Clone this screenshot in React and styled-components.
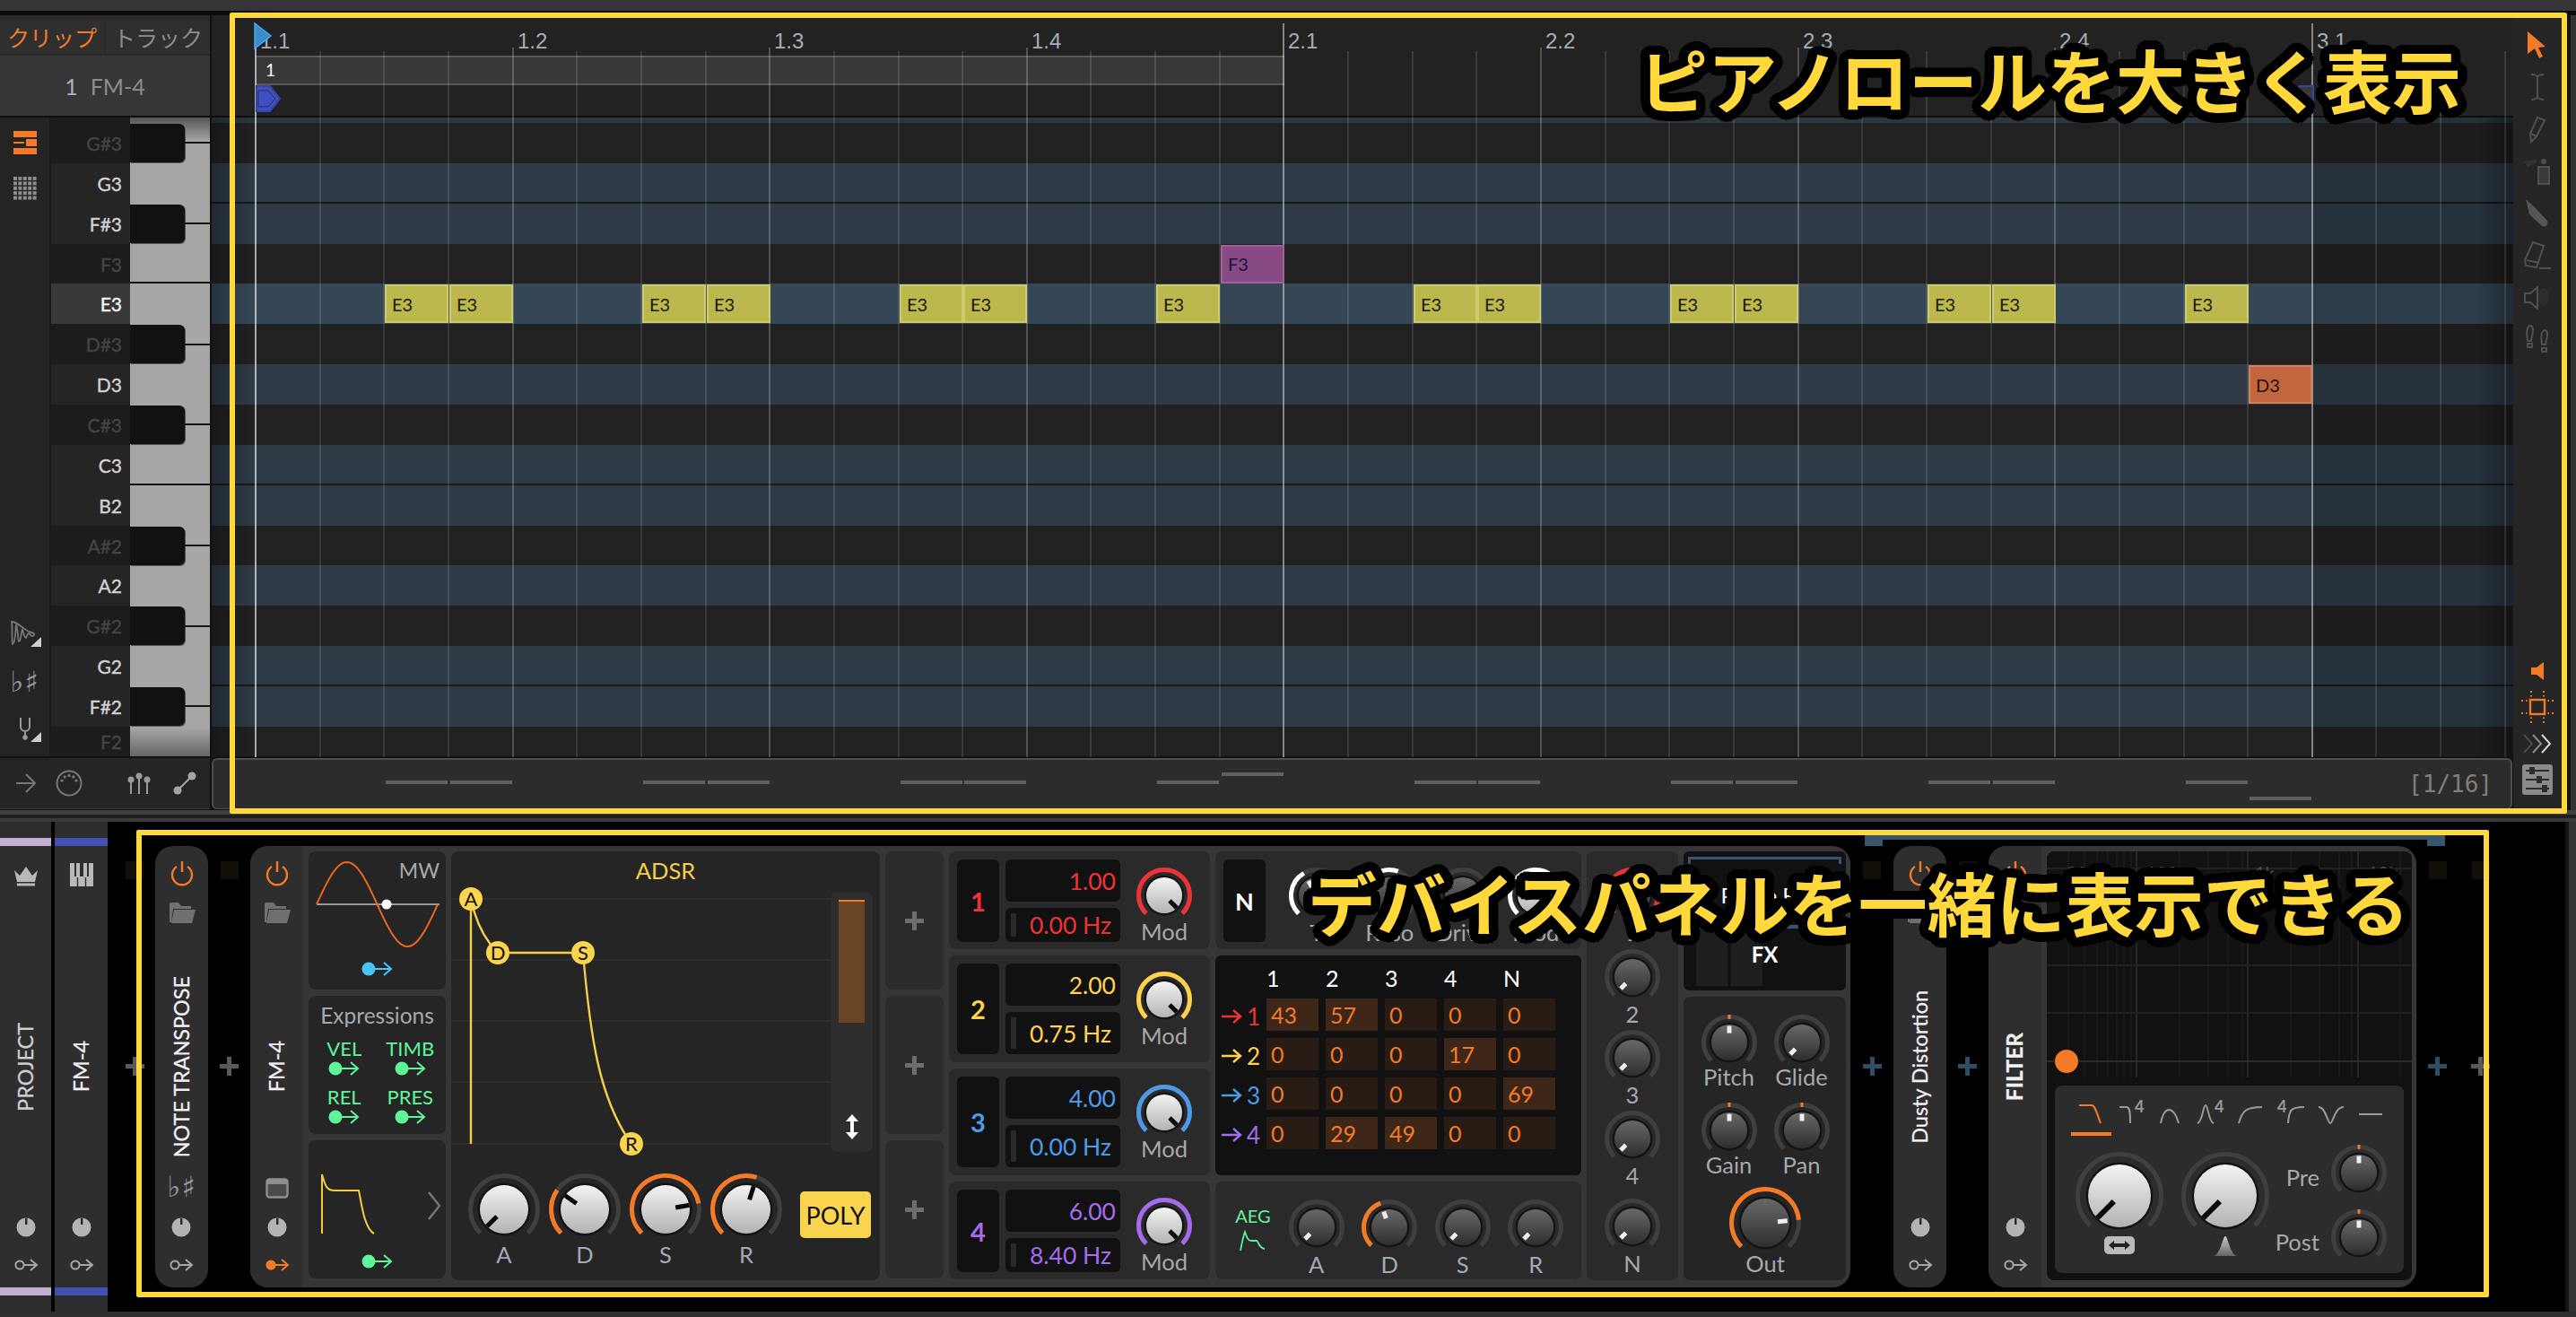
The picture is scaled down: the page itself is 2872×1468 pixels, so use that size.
import React from 'react';
import styled, { createGlobalStyle, css } from 'styled-components';

const Global = createGlobalStyle`
  html, body { margin: 0; padding: 0; background: #000; }
  * { box-sizing: border-box; }
  #root { width: 2872px; height: 1468px; }
`;

const ORANGE = '#f47a28';
const GREEN = '#5ef59a';
const CYAN = '#49c4fb';
const STEP = 71.65;
const ORIGIN = 49;

/* ---------- page frame ---------- */
const Page = styled.div`
  position: relative; width: 2872px; height: 1468px; overflow: hidden;
  display: flex; flex-direction: column; background: #000;
  font-family: Lato, "Noto Sans CJK JP", sans-serif;
`;
const TopBar = styled.div`height: 12px; background: #353535; flex: none;`;
const TopGap = styled.div`height: 5px; background: #0b0b0b; flex: none;`;
const Seam = styled.div`height: ${p => p.$h}px; background: ${p => p.$c}; flex: none;`;
const BottomEdge = styled.div`height: 6px; background: #2f2f2f; flex: none;`;

const Editor = styled.div`display: flex; height: 886px; flex: none; background: #111;`;
const LeftPane = styled.div`width: 234px; flex: none; display: flex; flex-direction: column; background: #111;`;
const Spacer = styled.div`width: 2px; flex: none; background: #111;`;
const CenterPane = styled.div`position: relative; width: 2566px; flex: none; display: flex; flex-direction: column;`;
const Toolbar = styled.div`
  width: 60px; flex: none; display: flex; flex-direction: column; align-items: stretch;
  background: #252525; padding: 9px 7px 17px 0;
`;
const RightGutter = styled.div`flex: 1; border-left: 4px solid #141414; background: #333;`;

/* ---------- left pane ---------- */
const Tabs = styled.div`display: flex; gap: 2px; height: 45px; padding-top: 5px; background: #2a2a2a; flex: none;`;
const Tab = styled.div`
  flex: 1; height: 38px; display: flex; align-items: center; justify-content: center;
  font: 25px "Noto Sans CJK JP", sans-serif; background: #2f2f2f;
  color: ${p => (p.$on ? ORANGE : '#8c8c8c')};
`;
const TrackHeader = styled.div`
  height: 67px; flex: none; background: #363636; display: flex; align-items: center; justify-content: center;
  gap: 14px; font-size: 25px; color: #8d8d8d;
  b { font-weight: 400; color: #aab2ba; }
`;
const Rule = styled.div`height: 2px; flex: none; background: ${p => p.$c || '#0e0e0e'};`;
const KeysArea = styled.div`height: 712px; flex: none; display: flex; overflow: hidden;`;
const SideIcons = styled.div`
  width: 57px; flex: none; background: #242424; border-right: 2px solid #1a1a1a;
  display: flex; flex-direction: column; align-items: center; padding: 15px 0 16px;
`;
const IconGap = styled.div`height: 25px; flex: none;`;
const LowerIcons = styled.div`margin-top: auto; display: flex; flex-direction: column; align-items: center; gap: 26px;`;
const KeyLabels = styled.div`width: 88px; flex: none; display: flex; flex-direction: column;`;
const KeyLabel = styled.div`
  flex: none; height: ${p => p.$h}px; display: flex; align-items: center; justify-content: flex-end;
  padding-right: 9px; font-size: 21px; -webkit-text-stroke: .4px currentColor;
  background: ${p => (p.$sel ? '#383838' : p.$dim ? '#1c1c1c' : '#252525')};
  color: ${p => (p.$sel ? '#f4f4f4' : p.$dim ? '#444' : '#d2d2d2')};
`;
const Piano = styled.div`
  position: relative; width: 89px; flex: none; display: flex; flex-direction: column; background: #a6a6a6;
  &::before { content: ''; position: absolute; left: 0; right: 0; top: 0; height: 26px; background: linear-gradient(#555, #a6a6a6); }
  &::after { content: ''; position: absolute; left: 0; right: 0; bottom: 0; height: 32px; background: linear-gradient(#a6a6a6, #666); }
`;
const PianoRow = styled.div`
  flex: none; height: ${p => p.$h}px; display: flex; align-items: center; position: relative; z-index: 1;
  ${p => p.$line && 'border-bottom: 2px solid #111;'}
`;
const BlackKey = styled.div`
  width: 61px; height: 43px; flex: none; background: #111; border-radius: 0 6px 6px 0;
  box-shadow: 1px 1px 0 #555;
`;
const KeyTail = styled.div`flex: 1; height: 2px; background: #151515;`;
const BottomLeft = styled.div`
  height: 57px; flex: none; background: #252525; display: flex; align-items: center; border-bottom: 1px solid #3a3a3a;
  padding-left: 18px;
`;
const BottomGap = styled.div`width: ${p => p.$w}px; flex: none;`;

/* ---------- timeline ---------- */
const Ruler = styled.div`position: relative; height: 112px; flex: none; background: #222;`;
const BarLabel = styled.div`
  position: absolute; top: 15px; font: 24px "Liberation Sans", sans-serif; color: #a7adb5; z-index: 2;
`;
const Clip = styled.div`
  position: absolute; left: 49px; top: 45px; width: 1147px; height: 33px; background: #383838;
  border-top: 2px solid #585858; border-bottom: 2px solid #585858; color: #fff; font-size: 19px; padding: 2px 0 0 11px;
`;
const Marker = styled.div`position: absolute; top: 78px; left: ${p => p.$x}px; z-index: 2; display: flex;`;
const Playhead = styled.div`position: absolute; top: 8px; left: 47px; z-index: 3; display: flex;`;
const GridBody = styled.div`position: relative; height: 712px; flex: none; overflow: hidden;`;
const Strip = styled.div`height: 6px; background: #2a3640;`;
const Row = styled.div`
  position: relative; flex: none; height: ${p => p.$h}px;
  background: ${p => (p.$sel ? '#354756' : p.$blue ? '#2e3a45' : '#212121')};
  ${p => p.$line && 'border-bottom: 2px solid #181818;'}
`;
const Note = styled.div`
  position: absolute; top: 1px; height: 43px; width: 71px; z-index: 2; padding-left: 6px;
  display: flex; align-items: center; font-size: 20px; color: ${p => p.$ink};
  background: ${p => p.$fill}; border: 2px solid ${p => p.$edge};
`;
const GridLine = styled.div`
  position: absolute; width: 2px; bottom: 59px; z-index: 1; top: ${p => p.$top}px;
  background: rgba(255, 255, 255, ${p => p.$a});
`;
const ShadeLeft = styled.div`
  position: absolute; left: 0; top: 0; bottom: 0; width: 49px; z-index: 1;
  background: linear-gradient(90deg, rgba(0,0,0,.28), rgba(0,0,0,0));
`;
const ShadeRight = styled.div`
  position: absolute; left: 2343px; right: 0; top: 0; bottom: 0; z-index: 1;
  background: linear-gradient(90deg, rgba(0,0,0,.15), rgba(0,0,0,.15) calc(100% - 40px), rgba(0,0,0,.42));
`;
const LaneBar = styled.div`
  position: relative; height: 57px; flex: none; margin-right: 1px; background: #2c2c2c; border: 2px solid #4e4e4e;
  border-width: 2px 2px 1px 2px; border-radius: 6px;
  display: flex; align-items: center; justify-content: flex-end; padding-right: 20px;
  font: 26px "DejaVu Sans Mono", monospace; color: #7f7f7f;
`;
const Velocity = styled.div`position: absolute; height: 4px; width: 69px; background: #606060;`;

const ToolCell = styled.div`height: 47px; flex: none; display: flex; align-items: center; justify-content: center;`;
const ToolLower = styled.div`margin-top: auto; display: flex; flex-direction: column; align-items: center; gap: 12px;`;
const SettingsBox = styled.div`
  width: 34px; height: 34px; background: #8a8a8a; border-radius: 3px; display: flex; align-items: center; justify-content: center;
`;

/* ---------- device rack ---------- */
const Rack = styled.div`position: relative; display: flex; height: 546px; flex: none; background: #000;`;
const TrackStrip = styled.div`
  display: flex; flex-direction: column; flex: none; width: ${p => p.$w}px; margin-right: ${p => p.$mr || 0}px;
  background: #2d2d2d; padding-top: 18px;
`;
const ColorBar = styled.div`height: 9px; flex: none; background: ${p => p.$c};`;
const Chain = styled.div`display: flex; align-items: flex-start; padding-top: 27px; flex: 1;`;
const Slot = styled.div`
  width: ${p => p.$w}px; flex: none; display: flex; flex-direction: column; align-items: center;
  padding-left: ${p => p.$pl || 0}px;
`;
const SlotSquare = styled.div`width: 20px; height: 20px; margin-top: 17px; background: #120f08;`;
const Plus = styled.div`
  position: relative; width: 21px; height: 21px; margin-top: ${p => p.$mt ?? 198}px; color: ${p => p.$c || '#5a5a5a'};
  &::before { content: ''; position: absolute; left: 8px; top: 0; width: 5px; height: 100%; background: currentColor; }
  &::after { content: ''; position: absolute; top: 8px; left: 0; height: 5px; width: 100%; background: currentColor; }
`;
const Sidebar = styled.div`
  width: ${p => p.$w || 59}px; height: 492px; flex: none; display: grid; grid-template-rows: 1fr auto 1fr; justify-items: center;
  background: #2e2e2e;
  ${p => p.$round && 'border-radius: 20px;'}
`;
const SideTop = styled.div`display: flex; flex-direction: column; align-items: center; gap: 20px; padding-top: ${p => p.$pt ?? 15}px;`;
const SideBottom = styled.div`display: flex; flex-direction: column; align-items: center; justify-content: flex-end; gap: 21px; padding-bottom: 15px;`;
const VerticalName = styled.div`
  writing-mode: vertical-rl; transform: rotate(180deg); font-size: ${p => p.$s || 23.4}px; line-height: 1; white-space: nowrap;
  -webkit-text-stroke: .3px currentColor;
  color: ${p => p.$c || '#f0f0f0'}; font-weight: ${p => p.$w || 400};
`;
const SharpFlat = styled.div`
  font: 32px "DejaVu Sans", sans-serif; color: #9a9a9a; line-height: 26px; height: 26px; letter-spacing: 1px;
`;

const Device = styled.div`
  flex: none; display: flex; height: 492px; background: #363636; overflow: hidden; border-radius: 20px;
`;
const DeviceGrid = styled.div`
  flex: none; display: grid; grid-template-columns: 153px 478px 65px 291px 408px 102px 181px; column-gap: 6px;
  padding: 6px 5px 8px 6px; align-items: start;
`;
const Stack = styled.div`display: flex; flex-direction: column; gap: 7px;`;
const Panel = styled.div`
  position: relative; border-radius: 8px; background: ${p => p.$bg || '#252525'};
  ${p => p.$h && css`height: ${p.$h}px;`}
`;
const MwLabel = styled.div`position: absolute; right: 7px; top: 7px; font-size: 23px; color: #a7a9ab;`;
const CenterFlow = styled.div`display: flex; justify-content: center; margin-top: ${p => p.$mt || 0}px;`;
const ExprTitle = styled.div`text-align: center; font-size: 24.5px; color: #a7a9ab; padding-top: 8px; line-height: 28px;`;
const ExprGrid = styled.div`display: grid; grid-template-columns: 1fr 1fr; padding: 10px 3px 0; row-gap: 9px; justify-items: center;`;
const ExprCell = styled.div`
  display: flex; flex-direction: column; align-items: center; color: ${GREEN}; font-size: 22px; line-height: 25px;
`;
const EnvRow = styled.div`display: flex; align-items: flex-start; height: 125px; padding: 26px 0 0 0;`;

const AdsrTitle = styled.div`text-align: center; padding-top: 7px; font-size: 25.5px; line-height: 28px; color: #f5ce4a; height: 36px;`;
const GraphRow = styled.div`display: flex; align-items: flex-start; height: 310px;`;
const Scale = styled.div`
  width: 47px; height: 290px; margin-top: 9px; background: #2e2e2e; border-radius: 8px; padding: 9px 9px 14px;
  display: flex; flex-direction: column; align-items: center;
`;
const ScaleFill = styled.div`width: 29px; height: 137px; background: #694425; border-top: 2px solid ${ORANGE};`;
const ScaleArrow = styled.div`margin-top: auto; display: flex;`;
const AdsrKnobs = styled.div`display: flex; align-items: flex-start; padding: 9px 0 0 14px;`;
const PolyButton = styled.div`
  width: 79px; height: 52px; margin: 24px 0 0 15px; background: #f9d54f; border-radius: 5px;
  display: flex; align-items: center; justify-content: center; font-size: 27px; color: #111;
`;
const KnobCell = styled.div`
  display: flex; flex-direction: column; align-items: center; flex: none;
  ${p => p.$w && css`width: ${p.$w}px;`}
  ${p => p.$mt && css`margin-top: ${p.$mt}px;`}
  ${p => p.$h && css`height: ${p.$h}px;`}
`;
const KnobLabel = styled.div`
  font-size: 25.5px; line-height: 28px; margin-top: ${p => p.$lift ?? -8}px; text-align: center; white-space: nowrap;
  color: ${p => (p.$blue ? '#a3aab6' : '#a7a9ab')};
`;
const SvgBox = styled.svg`display: block; flex: none; overflow: visible;`;

const PlusCell = styled.div`
  height: 154px; border-radius: 8px; background: #2c2c2c; display: flex; align-items: center; justify-content: center;
`;
const OpRow = styled.div`
  display: grid; grid-template-columns: 47px 128px 1fr; grid-template-rows: 47px 1fr; gap: 7px; padding: 9px 9px ${p => p.$pb}px;
  height: ${p => p.$h}px; background: #2a2a2a; border-radius: 8px; color: ${p => p.$c};
`;
const OpNumber = styled.div`
  grid-row: 1 / span 2; background: #111; border-radius: 6px; display: flex; align-items: center; justify-content: center;
  font-weight: 700; font-size: 29px;
`;
const OpValue = styled.div`
  background: #111; border-radius: 6px; display: flex; align-items: center; justify-content: flex-end; padding-right: 5px; font-size: 26.5px;
`;
const OpHz = styled(OpValue)`padding: 0 10px 0 6px;`;
const Meter = styled.div`width: 6px; align-self: stretch; margin: 6px auto 6px 0; background: #2a2a2a;`;
const OpKnob = styled(KnobCell)`grid-column: 3; grid-row: 1 / span 2; margin-top: 5px;`;

const KnobBar = styled.div`
  display: flex; align-items: flex-start; height: 109px; padding: 9px; background: #2a2a2a; border-radius: 8px;
`;
const NBox = styled.div`
  width: 47px; height: 92px; margin-right: 16px; flex: none; background: #111; border-radius: 6px; color: #fff;
  display: flex; align-items: center; justify-content: center; font-weight: 700; font-size: 27px;
`;
const AegLead = styled.div`
  width: 66px; margin-right: -3px; flex: none; padding-top: 16px; display: flex; flex-direction: column; align-items: center;
  color: ${GREEN}; font-size: 20px; line-height: 26px; gap: 4px;
`;
const Matrix = styled.div`
  height: 245px; background: #111; border-radius: 6px; align-content: start;
  display: grid; grid-template-columns: 49px repeat(5, 58px); column-gap: 8px; grid-template-rows: 40px repeat(4, 36px); row-gap: 8px;
`;
const MatrixHead = styled.div`font-size: 25px; color: #fff; padding-top: 11px; line-height: 28px;`;
const MatrixRowHead = styled.div`
  display: flex; align-items: center; gap: 5px; padding: 4px 0 0 7px; color: ${p => p.$c}; font-size: 26px;
`;
const MatrixCell = styled.div`
  padding-left: 5px; display: flex; align-items: center; font-size: 25px; color: ${ORANGE};
  background: ${p => (p.$on ? '#3e2718' : '#281c14')};
`;
const KnobColumn = styled.div`
  height: 478px; background: #2a2a2a; border-radius: 8px; display: flex; flex-direction: column; align-items: center; padding-top: 14px;
`;
const FxDisplay = styled.div`
  height: 155px; background: #111; border-radius: 6px; padding: 6px 5px 5px; display: flex; flex-direction: column; overflow: hidden;
`;
const BracketTop = styled.div`height: 8px; border: 3px solid #37566e; border-bottom: 0; flex: none;`;
const FxName = styled.div`height: 68px; flex: none; display: flex; align-items: center; justify-content: center; color: #fff; font-size: 24px;`;
const BracketBottom = styled.div`height: 4px; background: #37566e; flex: none;`;
const FxLower = styled.div`position: relative; flex: 1; display: flex; gap: 4px; padding-left: 9px;`;
const FxBar = styled.div`width: 35px; background: #1f1f1f;`;
const FxLabel = styled.div`
  position: absolute; left: 0; right: 0; top: 14px; text-align: center; color: #fff; font-weight: 700; font-size: 24px;
`;
const MixPanel = styled.div`
  height: 316px; border-radius: 8px; background: #252525; display: grid; grid-template-columns: 81px 81px; row-gap: 11px;
  padding: 16px 0 0 10px; align-content: start;
`;
const OutCell = styled(KnobCell)`grid-column: 1 / span 2; margin-top: -4px;`;

/* filter */
const FilterBody = styled.div`padding: 6px 5px 8px 6px; flex: none;`;
const FilterDisplay = styled.div`
  width: 407px; height: 478px; background: #111; border-radius: 8px; display: flex; flex-direction: column; align-items: center; overflow: hidden;
`;
const FilterControls = styled.div`
  width: 389px; height: 209px; margin-top: 9px; background: #2c2c2c; border-radius: 8px; flex: none; padding: 18px 0 0 18px;
`;
const FilterTabs = styled.div`display: flex; height: 38px;`;
const FilterTab = styled.div`
  width: 44.5px; height: 38px; display: flex; justify-content: center; align-items: flex-start;
  ${p => p.$on && `border-bottom: 4px solid ${ORANGE};`}
`;
const FilterKnobs = styled.div`display: flex; align-items: flex-start; margin: 14px 0 0 -5px;`;
const BigCell = styled.div`width: 118px; display: flex; flex-direction: column; align-items: center; flex: none;`;
const BigIcon = styled.div`margin-top: -8px; display: flex;`;
const PrePost = styled.div`display: flex; flex-direction: column; margin-top: -8px; margin-left: -1px;`;
const PreRow = styled.div`display: flex; align-items: flex-start; height: 72px;`;
const PreLabel = styled.div`
  width: 47px; margin-top: 26px; text-align: right; font-size: 25.5px; line-height: 28px; color: #a7a9ab; margin-right: 9px; white-space: nowrap;
  display: flex; justify-content: flex-end;
`;

/* annotations */
const Frame = styled.div`
  position: absolute; left: ${p => p.$x}px; top: ${p => p.$y}px; width: ${p => p.$w}px; height: ${p => p.$h}px;
  border: 6px solid #ffd93b; border-radius: 2px; z-index: 20; pointer-events: none;
`;
const outline = (() => {
  const out = [];
  [10.5, 7, 3.5].forEach(r => {
    for (let i = 0; i < 28; i++) {
      const a = (i / 28) * Math.PI * 2;
      out.push(`${(Math.cos(a) * r).toFixed(1)}px ${(Math.sin(a) * r).toFixed(1)}px 0 #000`);
    }
  });
  return out.join(',');
})();
const Caption = styled.div`
  position: absolute; left: ${p => p.$x}px; top: ${p => p.$y}px; z-index: 21; white-space: nowrap;
  font: 700 77px/1 "Noto Sans CJK JP", sans-serif; color: #ffd93b; text-shadow: ${outline};
`;
const ChainBracket = styled.div`
  position: absolute; left: 2079px; top: 14px; width: 647px; height: 13px; border-top: 6px solid #37566e; z-index: 1;
  &::before, &::after { content: ''; position: absolute; top: -6px; width: 20px; height: 13px; background: #37566e; }
  &::before { left: 0; } &::after { right: 0; }
`;

/* ---------- drawings ---------- */
const pol = (cx, cy, r, deg) => {
  const a = ((deg - 90) * Math.PI) / 180;
  return [cx + r * Math.cos(a), cy + r * Math.sin(a)];
};
const arcPath = (c, r, a, b) => {
  const [x1, y1] = pol(c, c, r, a);
  const [x2, y2] = pol(c, c, r, b);
  return `M${x1} ${y1}A${r} ${r} 0 ${b - a > 180 ? 1 : 0} 1 ${x2} ${y2}`;
};
function Knob({ ring = 31, cap = 20, angle = -135, arcTo, arcColor = ORANGE, tone = 'dark', tick, long }) {
  const s = ring * 2 + 8;
  const c = s / 2;
  const r = ring - 2.5;
  const light = tone === 'light';
  const [x1, y1] = pol(c, c, cap * (long ? 0.25 : light ? 0.42 : 0.52), angle);
  const [x2, y2] = pol(c, c, cap * (light ? 1 : 0.92), angle);
  return (
    <SvgBox width={s} height={s} viewBox={`0 0 ${s} ${s}`}>
      <defs>
        <linearGradient id="capL" x1="0" y1="0" x2="0" y2="1"><stop offset="0" stopColor="#f3f3f3" /><stop offset="1" stopColor="#b3b3b3" /></linearGradient>
        <linearGradient id="capD" x1="0" y1="0" x2="0" y2="1"><stop offset="0" stopColor="#686868" /><stop offset="1" stopColor="#2e2e2e" /></linearGradient>
      </defs>
      <path d={arcPath(c, r, -135, 135)} fill="none" stroke="#3f3f3f" strokeWidth="5" />
      {arcTo !== undefined && <path d={arcPath(c, r, -135, arcTo)} fill="none" stroke={arcColor} strokeWidth="5" />}
      {tick && <path d={arcPath(c, r, -3, 3)} fill="none" stroke={ORANGE} strokeWidth="5" />}
      <circle cx={c} cy={c} r={cap + 2.5} fill="#141414" />
      <circle cx={c} cy={c} r={cap} fill={light ? 'url(#capL)' : 'url(#capD)'} />
      <line x1={x1} y1={y1} x2={x2} y2={y2} stroke={light ? '#0a0a0a' : '#efefef'} strokeWidth={long ? 6 : 5} />
    </SvgBox>
  );
}
const Power = () => (
  <SvgBox width="26" height="28" viewBox="0 0 26 28" fill="none" stroke={ORANGE} strokeWidth="2.4">
    <path d="M7 8a11 11 0 1 0 12 0" /><path d="M13 2v12" />
  </SvgBox>
);
const Folder = () => (
  <SvgBox width="30" height="23" viewBox="0 0 30 23"><path d="M1 2q0-2 2-2h8l3 4h11v3H5L3 22H1z M6 8h24l-4 15H3z" fill="#707070" /></SvgBox>
);
const MiniKnob = () => (
  <SvgBox width="22" height="22" viewBox="0 0 22 22"><circle cx="11" cy="11" r="10.5" fill="#b4b4b4" /><rect x="10" y="1" width="2.4" height="7" fill="#2a2a2a" /></SvgBox>
);
const OutArrow = ({ c = '#a8a8a8', solid }) => (
  <SvgBox width="26" height="20" viewBox="0 0 26 20" fill="none" stroke={c} strokeWidth="2">
    <circle cx="6" cy="10" r="4.6" fill={solid ? c : 'none'} /><path d="M11 10h14M18 4l7 6-7 6" />
  </SvgBox>
);
const ModArrow = ({ c }) => (
  <SvgBox width="35" height="20" viewBox="0 0 35 20" fill="none" stroke={c} strokeWidth="2">
    <circle cx="8" cy="10" r="7.5" fill={c} stroke="none" /><path d="M12 10h21M25 3l8 7-8 7" />
  </SvgBox>
);
const RowArrow = ({ c }) => (
  <SvgBox width="23" height="20" viewBox="0 0 23 20" fill="none" stroke={c} strokeWidth="2.4"><path d="M0 10h21M13 3l8 7-8 7" /></SvgBox>
);
const Crown = () => (
  <SvgBox width="28" height="23" viewBox="0 0 28 23"><path d="M1 5l6 6 7-10 7 10 6-6-3 13H4z" fill="#b9b9b9" /><rect x="4" y="19.5" width="20" height="3" fill="#b9b9b9" /></SvgBox>
);
const PianoGlyph = () => (
  <SvgBox width="26" height="26" viewBox="0 0 26 26">
    <path d="M0 0h5v15h2V0h4v15h4V0h4v15h2V0h5v26H0z" fill="#b9b9b9" /><path d="M8.5 16v10M17.5 16v10" stroke="#2d2d2d" strokeWidth="1.4" />
  </SvgBox>
);
const WindowIcon = () => (
  <SvgBox width="26" height="23" viewBox="0 0 26 23"><rect x="1.5" y="1.5" width="23" height="20" rx="3" fill="#4b4b4b" stroke="#8f8f8f" strokeWidth="2.4" /><rect x="2" y="2" width="22" height="5" fill="#8f8f8f" /></SvgBox>
);
const RollIcon = () => (
  <SvgBox width="26" height="26" viewBox="0 0 26 26" fill={ORANGE}>
    <rect x="0" y="0" width="26" height="7" /><rect x="14" y="9" width="12" height="8" /><rect x="0" y="12" width="12" height="2" /><rect x="0" y="19" width="26" height="7" />
  </SvgBox>
);
const DotsIcon = () => (
  <SvgBox width="26" height="26" viewBox="0 0 26 26" fill="#8d8d8d">
    {[0, 1, 2, 3, 4].flatMap(r => [0, 1, 2, 3, 4].map(c => <rect key={`${r}${c}`} x={c * 5.4} y={r * 5.4} width="4" height="4" />))}
  </SvgBox>
);
const WaveIcon = () => (
  <SvgBox width="36" height="30" viewBox="0 0 36 30" fill="none" stroke="#777" strokeWidth="1.8">
    <path d="M3 2c1 6 0 18 1 25 4-2 3-18 4-21 2 3 2 16 3 18 3-1 2-11 4-13 1 2 2 9 4 9 1-2 2-5 3-5s2 3 4 3 4-3-1-4-7-4-9-5-8-7-13-7z" />
    <path d="M36 30H24l12-11z" fill="#cfcfcf" stroke="none" />
  </SvgBox>
);
const ForkIcon = () => (
  <SvgBox width="36" height="28" viewBox="0 0 36 28">
    <path d="M13 1v10a5 5 0 0 0 10 0V1M18 16v7" fill="none" stroke="#9a9a9a" strokeWidth="2" /><circle cx="18" cy="23" r="2.8" fill="#9a9a9a" />
    <path d="M36 28H24l12-11z" fill="#cfcfcf" />
  </SvgBox>
);
const ArrowLine = () => (
  <SvgBox width="22" height="24" viewBox="0 0 22 24" fill="none" stroke="#777" strokeWidth="2"><path d="M0 12h20M11 2l10 10-10 10" /></SvgBox>
);
const MidiIcon = () => (
  <SvgBox width="30" height="30" viewBox="0 0 30 30"><circle cx="15" cy="15" r="13.5" fill="none" stroke="#777" strokeWidth="2" />
    {[-70, -35, 0, 35, 70].map(a => { const [x, y] = pol(15, 15, 8.5, a); return <circle key={a} cx={x} cy={y} r="1.7" fill="#777" />; })}
  </SvgBox>
);
const MixerIcon = () => (
  <SvgBox width="26" height="24" viewBox="0 0 26 24" fill="#9b9b9b">
    <rect x="3" y="7" width="2" height="17" /><rect x="12" y="4" width="2" height="20" /><rect x="21" y="7" width="2" height="17" />
    <circle cx="4" cy="8" r="3.5" /><circle cx="13" cy="4" r="3.5" /><circle cx="22" cy="8" r="3.5" />
  </SvgBox>
);
const LinkIcon = () => (
  <SvgBox width="26" height="26" viewBox="0 0 26 26"><path d="M5 21L21 5" stroke="#a5a5a5" strokeWidth="2" /><circle cx="5" cy="21" r="4.5" fill="#a5a5a5" /><circle cx="21" cy="5" r="4.5" fill="#a5a5a5" /></SvgBox>
);
const Dim = { fill: 'none', stroke: '#505050', strokeWidth: 2 };
const tools = [
  <SvgBox key="c" width="22" height="30" viewBox="0 0 22 30"><path d="M0 0l20 17-8 1 5 10-4 2-5-11-8 6z" fill={ORANGE} /></SvgBox>,
  <SvgBox key="i" width="16" height="30" viewBox="0 0 16 30" {...Dim}><path d="M1 1c3 0 6 0 7 3 1-3 4-3 7-3M8 4v22M1 29c3 0 6 0 7-3 1 3 4 3 7 3" /></SvgBox>,
  <SvgBox key="p" width="20" height="30" viewBox="0 0 20 30" {...Dim}><path d="M10 2l8 3-9 18-6 6-1-9z M3 20l6 3" /></SvgBox>,
  <SvgBox key="s" width="30" height="30" viewBox="0 0 30 30"><path d="M0 4l14-2v3L4 10z" fill="#333" /><path d="M16 10h12v19H16z" fill="#3a3a3a" stroke="#505050" strokeWidth="2" /><circle cx="22" cy="4" r="3" fill="#505050" /></SvgBox>,
  <SvgBox key="b" width="26" height="32" viewBox="0 0 26 32"><path d="M0 0l10 9 14 15c2 4-2 8-6 6L4 17z" fill="#555" /></SvgBox>,
  <SvgBox key="e" width="30" height="32" viewBox="0 0 30 32" {...Dim}><path d="M10 1l12 4-8 24-12-2-1-6z M3 21l14 3M17 30h13" /></SvgBox>,
  <SvgBox key="v" width="30" height="26" viewBox="0 0 30 26"><path d="M1 8h6l8-7v24l-8-7H1z" fill="none" stroke="#505050" strokeWidth="2" /><ellipse cx="22" cy="12" rx="6" ry="10" fill="#2e2e2e" /></SvgBox>,
  <SvgBox key="f" width="28" height="34" viewBox="0 0 28 34" fill="none" stroke="#505050" strokeWidth="2"><path d="M3 4c3-5 6-3 6 2s-2 9-2 12H3C3 14 1 8 3 4zM19 9c3-5 6-3 6 2 0 4-2 8-2 11h-4c0-4-2-9 0-13zM3 21h5v4H3zM19 26h5v4h-5z" /></SvgBox>,
];
const VDown = () => (
  <SvgBox width="14" height="20" viewBox="0 0 14 20"><path d="M0 6h6l8-6v20l-8-6H0z" fill={ORANGE} /></SvgBox>
);
const Snap = () => (
  <SvgBox width="36" height="36" viewBox="0 0 36 36" fill="none" stroke={ORANGE} strokeWidth="2">
    <rect x="10" y="10" width="16" height="16" strokeWidth="2.4" />
    <path d="M11 0v2M25 0v2M11 34v2M25 34v2M0 11h2M0 25h2M34 11h2M34 25h2" />
    <path d="M11 5v1.500M25 5v1.500M11 29.500v1.500M25 29.500v1.500M5 11h1.500M5 25h1.500M29.500 11h1.500M29.500 25h1.500" />
  </SvgBox>
);
const Chevrons = () => (
  <SvgBox width="32" height="22" viewBox="0 0 32 22" fill="none" strokeWidth="2">
    <path d="M1 1l9 10-9 10" stroke="#4a4a4a" /><path d="M11 1l9 10-9 10" stroke="#8a8a8a" /><path d="M21 1l9 10-9 10" stroke="#d4d4d4" />
  </SvgBox>
);
const Sliders = () => (
  <SvgBox width="30" height="28" viewBox="0 0 30 28" stroke="#2c2c2c" strokeWidth="2" fill="#2c2c2c">
    <path d="M2 4h26M2 14h26M2 24h26" /><rect x="7" y="1" width="4" height="6" /><rect x="15" y="11" width="4" height="6" /><rect x="21" y="21" width="4" height="6" />
  </SvgBox>
);
const Wave = () => {
  const pts = [];
  for (let i = 0; i <= 60; i++) {
    const x = 9 + (135 * i) / 60;
    pts.push(`${x.toFixed(1)},${(59 - 47 * Math.sin((i / 60) * 2 * Math.PI)).toFixed(1)}`);
  }
  return (
    <SvgBox width="153" height="118" viewBox="0 0 153 118">
      <line x1="9" y1="59" x2="146" y2="59" stroke="#9a9a9a" strokeWidth="2" />
      <polyline points={pts.join(' ')} fill="none" stroke="#e8691c" strokeWidth="2" />
      <circle cx="87" cy="59" r="5.5" fill="#fff" />
    </SvgBox>
  );
};
const MiniEnv = () => (
  <SvgBox width="153" height="80" viewBox="0 0 153 80" fill="none">
    <path d="M15 78V12c3 10 4 18 14 18h27c3 14 6 42 17 48" stroke="#f5c93f" strokeWidth="2" />
    <path d="M134 62l12-15-12-15" stroke="#777" strokeWidth="2.4" />
  </SvgBox>
);
const AegGlyph = () => (
  <SvgBox width="30" height="22" viewBox="0 0 30 22" fill="none" stroke={GREEN} strokeWidth="1.8"><path d="M1 22Q4 6 6 1c2 6 3 10 7 10h6c2 0 2 8 9 9" /></SvgBox>
);
const NODE_R = 13;
const AdsrGraph = () => {
  const nodes = [['A', 22, 17], ['D', 52, 77], ['S', 147, 77], ['R', 201, 290]];
  return (
    <SvgBox width="423" height="310" viewBox="0 0 423 310">
      {[17, 85, 153, 221, 290].map(y => <line key={y} x1="0" x2="423" y1={y} y2={y} stroke="#2e2e2e" strokeWidth="2" />)}
      <g fill="none" stroke="#f5ce4a" strokeWidth="2.4">
        <path d="M22 17V290M22 17Q30 55 52 77H147C155 170 165 240 201 290" />
      </g>
      {nodes.map(([t, x, y]) => (
        <g key={t}>
          <circle cx={x} cy={y} r={NODE_R} fill="#f9d44c" />
          <text x={x} y={y + 8} textAnchor="middle" fontSize="22" fontFamily="Lato" fill="#111">{t}</text>
        </g>
      ))}
    </SvgBox>
  );
};
const UpDown = () => (
  <SvgBox width="14" height="28" viewBox="0 0 14 28" fill="#fff"><path d="M7 0l7 8H9v12h5l-7 8-7-8h5V8H0z" /></SvgBox>
);
const FreqGrid = () => {
  const vs = [2306, 2324, 2338, 2350, 2360, 2368, 2376, 2382, 2430, 2462, 2484, 2500, 2506, 2554, 2586, 2608, 2622, 2629, 2676];
  return (
    <SvgBox width="407" height="252" viewBox="0 0 407 252">
      {vs.map(v => <line key={v} x1={v - 2282} x2={v - 2282} y1="0" y2="252" stroke={[2382, 2506, 2629].includes(v) ? '#262626' : '#191919'} strokeWidth="2" />)}
      {[19, 127, 180, 234].map(y => <line key={y} x1="0" x2="407" y1={y} y2={y} stroke={y === 234 ? '#2b2b2b' : '#212121'} strokeWidth="2" />)}
      {[[22, '20'], [111, '100'], [232, '1k'], [358, '10k']].map(([x, t]) => (
        <text key={t} x={x} y="31" fontSize="20" fontFamily="Lato" fill="#4a4a4a">{t}</text>
      ))}
      <circle cx="22" cy="234" r="13" fill={ORANGE} />
    </SvgBox>
  );
};
const filterShapes = [
  ['M2 4H16C20 4 22 14 26 24', null],
  ['M2 6H10C14 6 14 14 14 24', '4'],
  ['M4 24C8 4 18 4 24 24', null],
  ['M0 24C6 22 6 4 9 4C12 4 12 22 18 24', '4'],
  ['M2 24C6 10 10 6 28 6', null],
  ['M12 24C13 10 14 6 30 6', 'l4'],
  ['M2 6C10 6 12 24 15 24C18 24 20 6 30 6', null],
  ['M2 14H28', null],
];
const FilterShape = ({ d, sup, on }) => (
  <SvgBox width="30" height="26" viewBox="0 0 30 26" fill="none" stroke={on ? ORANGE : '#9a9a9a'} strokeWidth="2">
    <path d={d} />
    {sup && <text x={sup === 'l4' ? 0 : 19} y="12" fontSize="18" fontWeight="700" fontFamily="Lato" fill="#9a9a9a" stroke="none">4</text>}
  </SvgBox>
);
const WidthIcon = () => (
  <SvgBox width="34" height="20" viewBox="0 0 34 20"><rect width="34" height="20" rx="5" fill="#bbb" /><path d="M5 10l6-5v3h12V5l6 5-6 5v-3H11v3z" fill="#222" /></SvgBox>
);
const PeakIcon = () => (
  <SvgBox width="26" height="22" viewBox="0 0 26 22">
    <defs><linearGradient id="pk" x1="0" y1="0" x2="0" y2="1"><stop offset="0" stopColor="#c8c8c8" /><stop offset="1" stopColor="#666" /></linearGradient></defs>
    <path d="M0 22C8 20 10 0 13 0s5 20 13 22z" fill="url(#pk)" />
  </SvgBox>
);
const Pent = ({ flip }) => (
  <SvgBox width="28" height="30" viewBox="0 0 28 30" style={flip ? { transform: 'scaleX(-1)' } : undefined}>
    <path d="M1 1H16L27 15 16 29H1Z" fill={flip ? '#3a3a3a' : '#3e50c4'} stroke="#3444a8" strokeWidth="2" />
    {!flip && <path d="M3 6H14L22 15 14 24H3Z" fill="none" stroke="#2d2d48" strokeWidth="1" />}
  </SvgBox>
);

/* ---------- data ---------- */
const H = 44.87;
const ROWS = [
  ['G#3', 0, 0], ['G3', 1, 1], ['F#3', 1, 0], ['F3', 0, 0], ['E3', 2, 0], ['D#3', 0, 0], ['D3', 1, 0], ['C#3', 0, 0],
  ['C3', 1, 1], ['B2', 1, 0], ['A#2', 0, 0], ['A2', 1, 0], ['G#2', 0, 0], ['G2', 1, 1], ['F#2', 1, 0], ['F2', 0, 0],
].map(([name, kind, line], i) => ({ name, kind, line, h: i === 15 ? 33 : H, black: name.includes('#') }));
const NOTES = {
  E3: [2, 3, 6, 7, 10, 11, 14, 18, 19, 22, 23, 26, 27, 30],
  F3: [15],
  D3: [31],
};
const NOTE_STYLE = {
  E3: { $fill: '#bcb84e', $edge: '#cfcb6a', $ink: '#1b1b0c' },
  F3: { $fill: '#874a83', $edge: '#a0609b', $ink: '#1c1440' },
  D3: { $fill: '#c2663f', $edge: '#d47f5c', $ink: '#2a1008' },
};
const VEL_Y = { E3: 23, F3: 14, D3: 41 };
const OPS = [
  { n: '1', c: '#ee3338', v: '1.00', hz: '0.00 Hz', h: 109, pb: 8 },
  { n: '2', c: '#ffd24a', v: '2.00', hz: '0.75 Hz', h: 119, pb: 9 },
  { n: '3', c: '#4d9be6', v: '4.00', hz: '0.00 Hz', h: 119, pb: 9 },
  { n: '4', c: '#a56bec', v: '6.00', hz: '8.40 Hz', h: 109, pb: 8 },
];
const MATRIX = [
  ['1', '#ee3338', [43, 57, 0, 0, 0]],
  ['2', '#ffd24a', [0, 0, 0, 17, 0]],
  ['3', '#4d9be6', [0, 0, 0, 0, 69]],
  ['4', '#a56bec', [0, 29, 49, 0, 0]],
];
const BARS = ['1.1', '1.2', '1.3', '1.4', '2.1', '2.2', '2.3', '2.4', '3.1'];

const Tl = i => Math.round(ORIGIN + i * STEP);

export default function App() {
  return (
    <Page>
      <Global />
      <TopBar />
      <TopGap />
      <Editor>
        <LeftPane>
          <Tabs><Tab $on>クリップ</Tab><Tab>トラック</Tab></Tabs>
          <TrackHeader><b>1</b><span>FM-4</span></TrackHeader>
          <Rule />
          <KeysArea>
            <SideIcons>
              <RollIcon />
              <IconGap />
              <DotsIcon />
              <LowerIcons>
                <WaveIcon />
                <SharpFlat>♭♯</SharpFlat>
                <ForkIcon />
              </LowerIcons>
            </SideIcons>
            <KeyLabels>
              <KeyLabel $h={6} $dim />
              {ROWS.map(r => (
                <KeyLabel key={r.name} $h={r.h} $dim={r.kind === 0} $sel={r.kind === 2}>{r.name}</KeyLabel>
              ))}
            </KeyLabels>
            <Piano>
              <PianoRow $h={6} />
              {ROWS.map(r => (
                <PianoRow key={r.name} $h={r.h} $line={r.name === 'F3' || r.name === 'C3'}>
                  {r.black && <><BlackKey /><KeyTail /></>}
                </PianoRow>
              ))}
            </Piano>
          </KeysArea>
          <Rule $c="#111" />
          <BottomLeft>
            <ArrowLine />
            <BottomGap $w={22} /><MidiIcon />
            <BottomGap $w={50} /><MixerIcon />
            <BottomGap $w={25} /><LinkIcon />
          </BottomLeft>
        </LeftPane>
        <Spacer />
        <CenterPane>
          <Ruler>
            {BARS.map((b, i) => <BarLabel key={b} style={{ left: Tl(i * 4) + 5 }}>{b}</BarLabel>)}
            <Clip>1</Clip>
            <Marker $x={49}><Pent /></Marker>
            <Marker $x={2316}><Pent flip /></Marker>
            <Playhead>
              <SvgBox width="20" height="30" viewBox="0 0 20 30"><path d="M1 1L19 15 1 29z" fill="#3a8ccb" stroke="#46aaf0" strokeWidth="1.5" /></SvgBox>
            </Playhead>
          </Ruler>
          <Rule />
          <GridBody>
            <Strip />
            {ROWS.map(r => (
              <Row key={r.name} $h={r.h} $blue={r.kind === 1} $sel={r.kind === 2} $line={r.line}>
                {(NOTES[r.name] || []).map(s => (
                  <Note key={s} {...NOTE_STYLE[r.name]} style={{ left: Tl(s) + 1 }}>{r.name}</Note>
                ))}
              </Row>
            ))}
            <ShadeLeft />
            <ShadeRight />
          </GridBody>
          <Rule $c="#111" />
          <LaneBar>
            {Object.entries(NOTES).flatMap(([p, list]) => list.map(s => (
              <Velocity key={p + s} style={{ left: Tl(s), top: VEL_Y[p] }} />
            )))}
            [1/16]
          </LaneBar>
          {Array.from({ length: 36 }, (_, i) => (
            <GridLine
              key={i}
              style={{ left: Tl(i) - 1 }}
              $top={i % 16 === 0 ? 9 : i % 4 === 0 ? 36 : 40}
              $a={i === 0 ? 0.62 : i % 16 === 0 ? 0.45 : i % 4 === 0 ? 0.22 : 0.11}
            />
          ))}
        </CenterPane>
        <Toolbar>
          {tools.map((t, i) => <ToolCell key={i}>{t}</ToolCell>)}
          <ToolLower>
            <VDown />
            <Snap />
            <Chevrons />
            <SettingsBox><Sliders /></SettingsBox>
          </ToolLower>
        </Toolbar>
        <RightGutter />
      </Editor>
      <Seam $h={5} $c="#3f3f3f" />
      <Seam $h={4} $c="#1e1e1e" />
      <Seam $h={4} $c="#3a3a3a" />
      <Rack>
        <ChainBracket />
        <TrackStrip $w={57} $mr={4}>
          <ColorBar $c="#c4aed4" />
          <Sidebar $w={57}>
            <SideTop $pt={22}><Crown /></SideTop>
            <VerticalName $c="#cfcfcf">PROJECT</VerticalName>
            <SideBottom><MiniKnob /><OutArrow /></SideBottom>
          </Sidebar>
          <ColorBar $c="#c4aed4" />
        </TrackStrip>
        <TrackStrip $w={59}>
          <ColorBar $c="#4252b4" />
          <Sidebar>
            <SideTop $pt={19}><PianoGlyph /></SideTop>
            <VerticalName>FM-4</VerticalName>
            <SideBottom><MiniKnob /><OutArrow /></SideBottom>
          </Sidebar>
          <ColorBar $c="#4252b4" />
        </TrackStrip>
        <Chain>
          <Slot $w={53} $pl={7}><SlotSquare /><Plus /></Slot>
          <Sidebar $round>
            <SideTop><Power /><Folder /></SideTop>
            <VerticalName>NOTE TRANSPOSE</VerticalName>
            <SideBottom><SharpFlat>♭♯</SharpFlat><MiniKnob /><OutArrow /></SideBottom>
          </Sidebar>
          <Slot $w={47}><SlotSquare /><Plus /></Slot>
          <Device>
            <Sidebar>
              <SideTop><Power /><Folder /></SideTop>
              <VerticalName>FM-4</VerticalName>
              <SideBottom><WindowIcon /><MiniKnob /><OutArrow c={ORANGE} solid /></SideBottom>
            </Sidebar>
            <DeviceGrid>
              <Stack>
                <Panel $h={154}>
                  <Wave />
                  <MwLabel>MW</MwLabel>
                  <CenterFlow $mt={3}><ModArrow c={CYAN} /></CenterFlow>
                </Panel>
                <Panel $h={154}>
                  <ExprTitle>Expressions</ExprTitle>
                  <ExprGrid>
                    {['VEL', 'TIMB', 'REL', 'PRES'].map(t => (
                      <ExprCell key={t}>{t}<ModArrow c={GREEN} /></ExprCell>
                    ))}
                  </ExprGrid>
                </Panel>
                <Panel $h={154}>
                  <EnvRow><MiniEnv /></EnvRow>
                  <CenterFlow><ModArrow c={GREEN} /></CenterFlow>
                </Panel>
              </Stack>

              <Panel $h={478}>
                <AdsrTitle>ADSR</AdsrTitle>
                <GraphRow>
                  <AdsrGraph />
                  <Scale><ScaleFill /><ScaleArrow><UpDown /></ScaleArrow></Scale>
                </GraphRow>
                <AdsrKnobs>
                  <KnobCell $w={90}><Knob ring={40} cap={27} tone="light" /><KnobLabel $blue>A</KnobLabel></KnobCell>
                  <KnobCell $w={90}><Knob ring={40} cap={27} tone="light" angle={-55} arcTo={-55} /><KnobLabel $blue>D</KnobLabel></KnobCell>
                  <KnobCell $w={90}><Knob ring={40} cap={27} tone="light" angle={80} arcTo={80} /><KnobLabel $blue>S</KnobLabel></KnobCell>
                  <KnobCell $w={90}><Knob ring={40} cap={27} tone="light" angle={18} arcTo={18} /><KnobLabel $blue>R</KnobLabel></KnobCell>
                  <PolyButton>POLY</PolyButton>
                </AdsrKnobs>
              </Panel>

              <Stack>
                <PlusCell><Plus $mt={0} $c="#6e6e6e" /></PlusCell>
                <PlusCell><Plus $mt={0} $c="#6e6e6e" /></PlusCell>
                <PlusCell><Plus $mt={0} $c="#6e6e6e" /></PlusCell>
              </Stack>

              <Stack>
                {OPS.map(o => (
                  <OpRow key={o.n} $h={o.h} $pb={o.pb} $c={o.c}>
                    <OpNumber>{o.n}</OpNumber>
                    <OpValue>{o.v}</OpValue>
                    <OpKnob>
                      <Knob tone="light" angle={135} arcTo={135} arcColor={o.c} />
                      <KnobLabel $lift={-9}>Mod</KnobLabel>
                    </OpKnob>
                    <OpHz><Meter />{o.hz}</OpHz>
                  </OpRow>
                ))}
              </Stack>

              <Stack>
                <KnobBar>
                  <NBox>N</NBox>
                  <KnobCell $w={81.5} $mt={5}><Knob angle={-30} arcTo={-30} arcColor="#fff" /><KnobLabel>T</KnobLabel></KnobCell>
                  <KnobCell $w={81.5} $mt={5}><Knob angle={20} arcTo={20} arcColor="#fff" /><KnobLabel>Reso</KnobLabel></KnobCell>
                  <KnobCell $w={81.5} $mt={5}><Knob /><KnobLabel>Drive</KnobLabel></KnobCell>
                  <KnobCell $w={81.5} $mt={5}><Knob tone="light" angle={40} arcTo={40} arcColor="#fff" /><KnobLabel>Mod</KnobLabel></KnobCell>
                </KnobBar>
                <Matrix>
                  <div />
                  {['1', '2', '3', '4', 'N'].map(t => <MatrixHead key={t}>{t}</MatrixHead>)}
                  {MATRIX.flatMap(([n, c, vals]) => [
                    <MatrixRowHead key={`h${n}`} $c={c}><RowArrow c={c} />{n}</MatrixRowHead>,
                    ...vals.map((v, i) => <MatrixCell key={`${n}${i}`} $on={v > 0}>{v}</MatrixCell>),
                  ])}
                </Matrix>
                <KnobBar>
                  <AegLead>AEG<AegGlyph /></AegLead>
                  <KnobCell $w={81.5} $mt={7}><Knob /><KnobLabel $blue>A</KnobLabel></KnobCell>
                  <KnobCell $w={81.5} $mt={7}><Knob angle={-20} arcTo={-20} /><KnobLabel $blue>D</KnobLabel></KnobCell>
                  <KnobCell $w={81.5} $mt={7}><Knob /><KnobLabel $blue>S</KnobLabel></KnobCell>
                  <KnobCell $w={81.5} $mt={7}><Knob /><KnobLabel $blue>R</KnobLabel></KnobCell>
                </KnobBar>
              </Stack>

              <KnobColumn>
                <KnobCell $w={90} $h={91}><Knob angle={135} arcTo={135} arcColor="#ee3338" /><KnobLabel>1</KnobLabel></KnobCell>
                <KnobCell $w={90}><Knob /><KnobLabel>2</KnobLabel></KnobCell>
                <KnobCell $w={90}><Knob /><KnobLabel>3</KnobLabel></KnobCell>
                <KnobCell $w={90}><Knob /><KnobLabel>4</KnobLabel></KnobCell>
                <KnobCell $w={90} $mt={8}><Knob /><KnobLabel>N</KnobLabel></KnobCell>
              </KnobColumn>

              <Stack>
                <FxDisplay>
                  <BracketTop />
                  <FxName>Phase FX</FxName>
                  <BracketBottom />
                  <FxLower><FxBar /><FxBar /><FxLabel>FX</FxLabel></FxLower>
                </FxDisplay>
                <MixPanel>
                  <KnobCell $h={87}><Knob angle={0} tick /><KnobLabel $lift={-11}>Pitch</KnobLabel></KnobCell>
                  <KnobCell $h={87}><Knob /><KnobLabel $lift={-11}>Glide</KnobLabel></KnobCell>
                  <KnobCell $h={87}><Knob angle={0} tick /><KnobLabel $lift={-11}>Gain</KnobLabel></KnobCell>
                  <KnobCell $h={87}><Knob angle={0} tick /><KnobLabel $lift={-11}>Pan</KnobLabel></KnobCell>
                  <OutCell><Knob ring={40} cap={27} angle={85} arcTo={85} /><KnobLabel $lift={-13}>Out</KnobLabel></OutCell>
                </MixPanel>
              </Stack>
            </DeviceGrid>
          </Device>
          <Slot $w={48}><SlotSquare /><Plus $c="#2f4d63" /></Slot>
          <Sidebar $round>
            <SideTop><Power /><Folder /></SideTop>
            <VerticalName>Dusty Distortion</VerticalName>
            <SideBottom><MiniKnob /><OutArrow /></SideBottom>
          </Sidebar>
          <Slot $w={47}><SlotSquare /><Plus $c="#2f4d63" /></Slot>
          <Device>
            <Sidebar>
              <SideTop><Power /></SideTop>
              <VerticalName $w={700} $s={24.5}>FILTER</VerticalName>
              <SideBottom><MiniKnob /><OutArrow /></SideBottom>
            </Sidebar>
            <FilterBody>
              <FilterDisplay>
                <FreqGrid />
                <FilterControls>
                  <FilterTabs>
                    {filterShapes.map(([d, sup], i) => (
                      <FilterTab key={i} $on={i === 0}><FilterShape d={d} sup={sup} on={i === 0} /></FilterTab>
                    ))}
                  </FilterTabs>
                  <FilterKnobs>
                    <BigCell><Knob ring={49} cap={35} tone="light" long /><BigIcon><WidthIcon /></BigIcon></BigCell>
                    <BigCell><Knob ring={49} cap={35} tone="light" long /><BigIcon><PeakIcon /></BigIcon></BigCell>
                    <PrePost>
                      <PreRow><PreLabel>Pre</PreLabel><Knob angle={0} tick /></PreRow>
                      <PreRow><PreLabel>Post</PreLabel><Knob angle={0} tick /></PreRow>
                    </PrePost>
                  </FilterKnobs>
                </FilterControls>
              </FilterDisplay>
            </FilterBody>
          </Device>
          <Slot $w={47}><SlotSquare /><Plus $c="#2f4d63" /></Slot>
          <Slot $w={49}><SlotSquare /><Plus /></Slot>
        </Chain>
        <RightGutter style={{ flex: '0 0 12px' }} />
      </Rack>
      <BottomEdge />
      <Frame $x={256} $y={14} $w={2606} $h={893} />
      <Frame $x={152} $y={925} $w={2623} $h={521} />
      <Caption $x={1827} $y={49}>ピアノロールを大きく表示</Caption>
      <Caption $x={1458} $y={966}>デバイスパネルを一緒に表示できる</Caption>
    </Page>
  );
}
